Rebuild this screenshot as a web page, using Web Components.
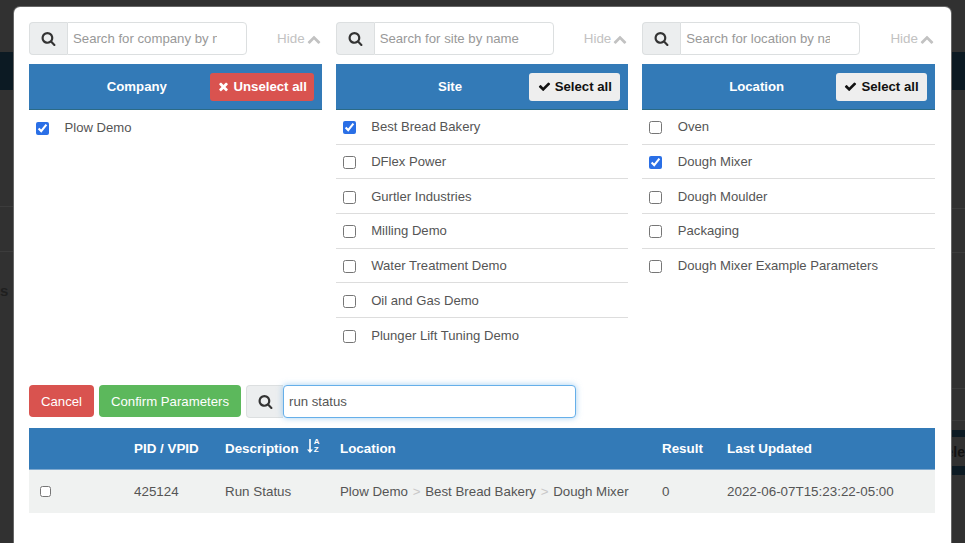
<!DOCTYPE html>
<html>
<head>
<meta charset="utf-8">
<title>Parameters</title>
<style>
    html, body { margin: 0; height: 100%; overflow: hidden; background: #313131; }
    body { font-family: "Liberation Sans", Arial, sans-serif; font-size: 13.2px; color: #555; }
</style>
</head>
<body>
<page-backdrop></page-backdrop>
<param-modal>
    <div slot="columns">
        <select-column name="Company" placeholder="Search for company by name" action="unselect">
            <check-row checked>Plow Demo</check-row>
        </select-column>
        <select-column name="Site" placeholder="Search for site by name" action="select">
            <check-row checked>Best Bread Bakery</check-row>
            <check-row>DFlex Power</check-row>
            <check-row>Gurtler Industries</check-row>
            <check-row>Milling Demo</check-row>
            <check-row>Water Treatment Demo</check-row>
            <check-row>Oil and Gas Demo</check-row>
            <check-row>Plunger Lift Tuning Demo</check-row>
        </select-column>
        <select-column name="Location" placeholder="Search for location by name" action="select">
            <check-row>Oven</check-row>
            <check-row checked>Dough Mixer</check-row>
            <check-row>Dough Moulder</check-row>
            <check-row>Packaging</check-row>
            <check-row>Dough Mixer Example Parameters</check-row>
        </select-column>
    </div>
    <param-toolbar slot="toolbar" value="run status"></param-toolbar>
    <param-table slot="table"></param-table>
</param-modal>

<script>
const ICONS = {
    search: 'M1216 832q0-185-131.5-316.5t-316.5-131.5-316.5 131.5-131.5 316.5 131.5 316.5 316.5 131.5 316.5-131.5 131.5-316.5zm512 832q0 52-38 90t-90 38q-54 0-90-38l-343-342q-179 124-399 124-143 0-273.5-55.5t-225-150-150-225-55.5-273.5 55.5-273.5 150-225 225-150 273.5-55.5 273.5 55.5 225 150 150 225 55.5 273.5q0 220-124 399l343 343q37 37 37 90z',
    check: 'M1671 566q0 40-28 68l-724 724-136 136q-28 28-68 28t-68-28l-136-136-362-362q-28-28-28-68t28-68l136-136q28-28 68-28t68 28l294 295 656-657q28-28 68-28t68 28l136 136q28 28 28 68z',
    times: 'M1490 1322q0 40-28 68l-136 136q-28 28-68 28t-68-28l-294-294-294 294q-28 28-68 28t-68-28l-136-136q-28-28-28-68t28-68l294-294-294-294q-28-28-28-68t28-68l136-136q28-28 68-28t68 28l294 294 294-294q28-28 68-28t68 28l136 136q28 28 28 68t-28 68l-294 294 294 294q28 28 28 68z',
    up: 'M1683 1331l-166 165q-19 19-45 19t-45-19l-531-531-531 531q-19 19-45 19t-45-19l-166-165q-19-19-19-45.5t19-45.5l742-741q19-19 45-19t45 19l742 741q19 19 19 45.5t-19 45.5z'
};
const icon = (name, size) => `<svg width="${size}" height="${size}" viewBox="0 0 1792 1792" fill="currentColor"><path d="${ICONS[name]}"/></svg>`;

const GROUP_STYLE = `
    .group { display: flex; height: 33px; box-sizing: border-box; }
    .addon {
        flex: none;
        display: flex;
        align-items: center;
        justify-content: center;
        width: 38px;
        box-sizing: border-box;
        background: #eceeef;
        border: 1.5px solid #dcdfe0;
        border-right: 0;
        border-radius: 4px 0 0 4px;
        color: #333;
    }
    input {
        flex: 1;
        min-width: 0;
        box-sizing: border-box;
        height: 100%;
        font: 13.2px "Liberation Sans", Arial, sans-serif;
        color: #555;
        background: #fff;
        border: 1.5px solid #dcdfe0;
        border-radius: 0 4px 4px 0;
        padding: 0 29px 0 5px;
        outline: none;
    }
    input::placeholder { color: #999; opacity: 1; }
`;

// the dimmed page that sits behind the dialog, only its edges show
class PageBackdrop extends HTMLElement {
    constructor() {
        super();
        this.attachShadow({ mode: 'open' });
        this.shadowRoot.innerHTML = `
            <style>
                :host { display: block; height: 543px; background: #313131; padding-top: 52px; box-sizing: border-box; overflow: hidden; }
                .nav { height: 38px; background: #0c1a23; }
                .sides { display: flex; justify-content: space-between; }
                .left, .right { width: 14px; }
                .line { height: 1px; background: #3c3c3c; }
                .left .l1 { margin-top: 116px; }
                .left .l2 { margin-top: 44px; }
                .left .txt { margin-top: 30px; font: bold 15px/18px "Liberation Sans", sans-serif; color: #1f1f1f; }
                .right .l1 { margin-top: 118px; }
                .right .l2 { margin-top: 43px; }
                .right .l3 { margin-top: 135px; }
                .right .l4 { margin-top: 31px; }
                .band { background: #0c1a23; }
                .b1 { height: 7px; margin-top: 9px; }
                .b2 { height: 9px; }
                .ele {
                    display: flex;
                    justify-content: flex-end;
                    height: 29px;
                    font: bold 14px/30px "Liberation Sans", sans-serif;
                    color: #111;
                    white-space: nowrap;
                }
            </style>
            <div class="nav"></div>
            <div class="sides">
                <div class="left">
                    <div class="line l1"></div>
                    <div class="line l2"></div>
                    <div class="txt">s</div>
                </div>
                <div class="right">
                    <div class="line l1"></div>
                    <div class="line l2"></div>
                    <div class="line l3"></div>
                    <div class="line l4"></div>
                    <div class="band b1"></div>
                    <div class="ele"><span>ele</span></div>
                    <div class="band b2"></div>
                </div>
            </div>
        `;
    }
}

class ParamModal extends HTMLElement {
    constructor() {
        super();
        this.attachShadow({ mode: 'open' });
        this.shadowRoot.innerHTML = `
            <style>
                :host {
                    display: block;
                    position: absolute;
                    left: 14px;
                    top: 7px;
                    width: 937px;
                    height: 560px;
                    box-sizing: border-box;
                    background: #fff;
                    border-radius: 6px;
                    box-shadow: 0 0 0 1px #666;
                    padding: 15px 16px 15px 15px;
                }
                ::slotted([slot=columns]) {
                    display: grid;
                    grid-template-columns: repeat(3, 1fr);
                    column-gap: 14px;
                }
                ::slotted([slot=toolbar]) { margin-top: 32px; }
                ::slotted([slot=table]) { margin-top: 10px; }
            </style>
            <slot name="columns"></slot>
            <slot name="toolbar"></slot>
            <slot name="table"></slot>
        `;
    }
}

class SelectColumn extends HTMLElement {
    constructor() {
        super();
        this.attachShadow({ mode: 'open' });
    }

    connectedCallback() {
        const unselect = this.getAttribute('action') === 'unselect';
        this.shadowRoot.innerHTML = `
            <style>
                :host { display: block; min-width: 0; }
                ${GROUP_STYLE}
                .top { display: flex; justify-content: space-between; align-items: center; }
                .group { width: 218px; }
                .hide { display: flex; align-items: center; gap: 2px; padding-right: 1px; color: #c2c2c2; font-size: 13.4px; }
                .head {
                    display: flex;
                    align-items: center;
                    height: 46px;
                    box-sizing: border-box;
                    margin-top: 9px;
                    padding: 0 8px 0 35px;
                    background: #337ab7;
                    border-bottom: 1px solid #2b6a86;
                    color: #fff;
                    font-weight: bold;
                }
                .title { flex: 1; text-align: center; }
                button {
                    display: flex;
                    align-items: center;
                    justify-content: center;
                    gap: 4px;
                    height: 28px;
                    width: ${unselect ? 104 : 91}px;
                    padding: 0;
                    border: 0;
                    border-radius: 3px;
                    font: bold 13.2px "Liberation Sans", Arial, sans-serif;
                    background: #eeeeee;
                    color: #111;
                }
                button.unselect { background: #d9534f; color: #fff; }
            </style>
            <div class="top">
                <div class="group">
                    <span class="addon">${icon('search', 15)}</span>
                    <input type="text" placeholder="${this.getAttribute('placeholder')}">
                </div>
                <span class="hide">Hide ${icon('up', 14)}</span>
            </div>
            <div class="head">
                <span class="title">${this.getAttribute('name')}</span>
                <button class="${unselect ? 'unselect' : ''}">${icon(unselect ? 'times' : 'check', 13)}${unselect ? 'Unselect all' : 'Select all'}</button>
            </div>
            <slot></slot>
        `;
    }
}

class CheckRow extends HTMLElement {
    constructor() {
        super();
        this.attachShadow({ mode: 'open' });
    }

    connectedCallback() {
        this.shadowRoot.innerHTML = `
            <style>
                :host {
                    display: flex;
                    align-items: center;
                    height: 34.67px;
                    box-sizing: border-box;
                    padding-left: 7px;
                    border-bottom: 1px solid #ddd;
                    color: #555;
                    font-size: 13.1px;
                }
                :host(:last-child) { border-bottom: 0; }
                input { width: 13px; height: 13px; margin: 2px 15.5px 0 0; accent-color: #2a6fe6; flex: none; }
            </style>
            <input type="checkbox" ${this.hasAttribute('checked') ? 'checked' : ''}>
            <slot></slot>
        `;
    }
}

class ParamToolbar extends HTMLElement {
    constructor() {
        super();
        this.attachShadow({ mode: 'open' });
    }

    connectedCallback() {
        this.shadowRoot.innerHTML = `
            <style>
                :host { display: flex; align-items: center; gap: 5px; }
                ${GROUP_STYLE}
                .btn {
                    height: 32px;
                    padding: 0;
                    border: 0;
                    border-radius: 4px;
                    color: #fff;
                    font: 13.2px "Liberation Sans", Arial, sans-serif;
                }
                .cancel { background: #d9534f; width: 65px; }
                .confirm { background: #5cb85c; width: 142px; }
                .group { width: 330px; }
                input {
                    border: 1px solid #66afe9;
                    border-radius: 4px;
                    box-shadow: 0 0 6px rgba(102, 175, 233, .6);
                    padding-left: 5px;
                }
                .addon { width: 37px; }
            </style>
            <button class="btn cancel">Cancel</button>
            <button class="btn confirm">Confirm Parameters</button>
            <div class="group">
                <span class="addon">${icon('search', 15)}</span>
                <input type="text" value="${this.getAttribute('value')}">
            </div>
        `;
    }
}

class ParamTable extends HTMLElement {
    constructor() {
        super();
        this.attachShadow({ mode: 'open' });
        this.shadowRoot.innerHTML = `
            <style>
                :host { display: block; font-size: 13.4px; }
                .row { display: grid; grid-template-columns: 105px 91px 115px 322px 65px 1fr; align-items: center; }
                .head { height: 42px; background: #337ab7; color: #fff; font-weight: bold; border-bottom: 1px solid #7fa9cf; box-sizing: border-box; }
                .body { height: 43px; background: #f0f2f1; color: #555; }
                .sort { display: flex; align-items: center; gap: 8px; white-space: nowrap; }
                .az { display: flex; align-items: center; gap: 1px; margin-top: -4px; }
                .az b { display: block; font: bold 8px/8px "Liberation Sans", sans-serif; }
                .sep { color: #c8c8c8; padding: 0 1px; }
                .crumbs { white-space: nowrap; font-size: 13.3px; }
                input { width: 11px; height: 11px; margin: 0 0 0 11px; accent-color: #2a6fe6; display: block; }
            </style>
            <div class="row head">
                <span></span>
                <span>PID / VPID</span>
                <span class="sort">Description
                    <span class="az">
                        <svg width="6" height="14" viewBox="0 0 6 14" fill="currentColor"><path d="M2.2 0h1.6v10.5H6L3 14 0 10.5h2.2z"/></svg>
                        <span><b>A</b><b>Z</b></span>
                    </span>
                </span>
                <span>Location</span>
                <span>Result</span>
                <span>Last Updated</span>
            </div>
            <div class="row body">
                <span><input type="checkbox"></span>
                <span>425124</span>
                <span>Run Status</span>
                <span class="crumbs">Plow Demo <span class="sep">&gt;</span> Best Bread Bakery <span class="sep">&gt;</span> Dough Mixer</span>
                <span>0</span>
                <span>2022-06-07T15:23:22-05:00</span>
            </div>
        `;
    }
}

customElements.define('page-backdrop', PageBackdrop);
customElements.define('param-modal', ParamModal);
customElements.define('select-column', SelectColumn);
customElements.define('check-row', CheckRow);
customElements.define('param-toolbar', ParamToolbar);
customElements.define('param-table', ParamTable);
</script>
</body>
</html>
